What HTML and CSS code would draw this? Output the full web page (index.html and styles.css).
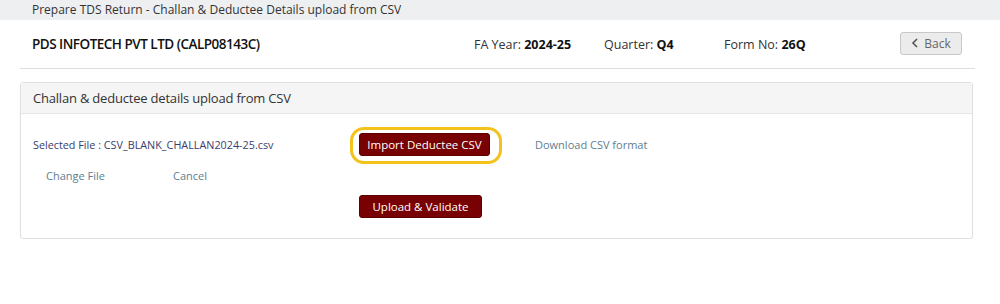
FILE: index.html
```html
<!DOCTYPE html>
<html>
<head>
<meta charset="utf-8">
<link rel="stylesheet" href="styles.css">
</head>
<body>
<div class="topbar">Prepare TDS Return - Challan &amp; Deductee Details upload from CSV</div>
<div class="header">
  <div class="company">PDS INFOTECH PVT LTD (CALP08143C)</div>
  <div class="info fa">FA Year: <b>2024-25</b></div>
  <div class="info qt">Quarter: <b>Q4</b></div>
  <div class="info fm">Form No: <b>26Q</b></div>
  <button class="back"><svg width="8" height="10" viewBox="0 0 8 10"><path d="M6 1 L2 5 L6 9" fill="none" stroke="#555" stroke-width="1.6"/></svg>Back</button>
</div>
<div class="panel">
  <div class="panel-head">Challan &amp; deductee details upload from CSV</div>
  <div class="panel-body">
    <div class="row row1">
      <div class="selected">Selected File : CSV_BLANK_CHALLAN2024-25.csv</div>
      <div class="hl"><button class="btn">Import Deductee CSV</button></div>
      <a class="link dl">Download CSV format</a>
    </div>
    <div class="row row2">
      <a class="link change">Change File</a>
      <a class="link">Cancel</a>
    </div>
    <div class="row row3">
      <button class="btn upload">Upload &amp; Validate</button>
    </div>
  </div>
</div>
</body>
</html>
```
FILE: styles.css
```css
body {
  margin: 0;
  font-family: "Open Sans", "Noto Sans", sans-serif;
  color: #222;
  background: #fff;
}
.topbar {
  height: 20px;
  line-height: 20px;
  background: #eeeff1;
  padding-left: 32px;
  font-size: 12px;
  color: #333;
}
.header {
  margin: 0 25px 0 20px;
  height: 48px;
  border-bottom: 1px solid #dedede;
  display: flex;
  align-items: center;
  padding-left: 12px;
}
.company {
  width: 442px;
  font-size: 13.5px;
  font-weight: 600;
  color: #111;
  letter-spacing: -0.5px;
}
.info {
  font-size: 12.5px;
  color: #333;
}
.info b { font-weight: 700; color: #111; }
.fa { width: 130px; }
.qt { width: 120px; }
.fm { width: 176px; }
.back {
  width: 62px;
  height: 23px;
  margin-top: -2px;
  border: 1px solid #c8c8c8;
  border-radius: 3px;
  background: #ececec;
  font-family: inherit;
  font-size: 12px;
  color: #666;
  display: flex;
  align-items: center;
  justify-content: center;
  gap: 5px;
  padding: 0;
}
.panel {
  margin: 13px 27px 0 20px;
  border: 1px solid #e0e0e0;
  border-radius: 3px;
  box-shadow: 0 1px 2px rgba(0,0,0,0.06);
}
.panel-head {
  height: 30px;
  line-height: 30px;
  background: #f5f5f5;
  border-bottom: 1px solid #e6e6e6;
  padding-left: 12px;
  font-size: 13px;
  letter-spacing: -0.2px;
  color: #333;
}
.panel-body {
  padding: 19px 0 20px 12px;
}
.row {
  display: flex;
  align-items: center;
}
.selected {
  width: 326px;
  font-size: 10.8px;
  color: #3c3c6e;
}
.hl {
  position: relative;
  display: flex;
}
.hl::before {
  content: "";
  position: absolute;
  left: -9px;
  right: -12px;
  top: -6px;
  bottom: -8px;
  border: 3px solid #f3c31c;
  border-radius: 14px;
}
.btn {
  position: relative;
  height: 23px;
  padding: 0;
  border: 1px solid #5e0000;
  border-radius: 3px;
  background: #780203;
  color: #fff;
  font-family: inherit;
  font-size: 11.5px;
}
.hl .btn { width: 131px; }
.link {
  font-size: 11px;
  color: #5d8093;
}
.dl { margin-left: 45px; }
.row2 { margin-top: 12px; padding-left: 13px; }
.change { width: 127px; }
.row3 { margin-top: 12px; padding-left: 326px; }
.upload { width: 123px; }
```
